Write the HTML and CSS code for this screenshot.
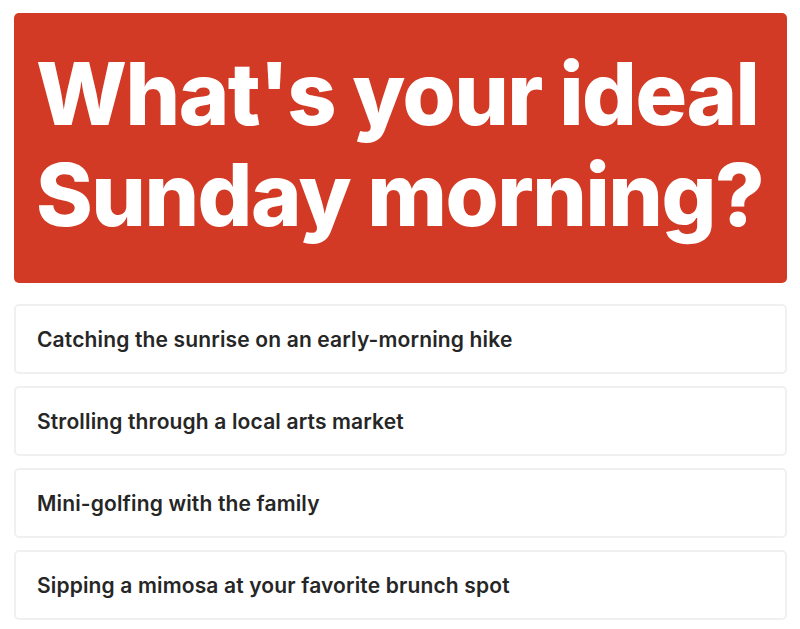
FILE: index.html
```html
<!DOCTYPE html>
<html lang="en">
<head>
  <meta charset="UTF-8">
  <title>Sunday Morning Quiz</title>
  <link rel="stylesheet" href="styles.css">
</head>
<body>
  <!-- Question header -->
  <div class="question">
    <h1>What's your ideal Sunday morning?</h1>
  </div>

  <!-- Answer options -->
  <div class="answers">
    <div class="answer">Catching the sunrise on an early-morning hike</div>
    <div class="answer">Strolling through a local arts market</div>
    <div class="answer">Mini-golfing with the family</div>
    <div class="answer">Sipping a mimosa at your favorite brunch spot</div>
  </div>
</body>
</html>
```

FILE: styles.css
```css
* {
  box-sizing: border-box;
}
body {
  margin: 0;
  padding: 13px 13px 0 14px;
  font-family: Inter, Lato, sans-serif;
  background: #fff;
}
/* Question header */
.question {
  background: #d33a26;
  border-radius: 5px;
  height: 270px;
  padding: 31px 10px 0 22px;
}
.question h1 {
  margin: 0;
  color: #fff;
  font-size: 86px;
  font-weight: 800;
  line-height: 101px;
  letter-spacing: -1.5px;
}
/* Answer options */
.answers {
  margin-top: 21px;
  display: flex;
  flex-direction: column;
  gap: 12px;
}
.answer {
  height: 70px;
  display: flex;
  align-items: center;
  padding: 0 21px;
  border: 2px solid #f0f0f0;
  border-radius: 5px;
  font-size: 21px;
  font-weight: 600;
  letter-spacing: 0.15px;
  color: #262626;
}
```
